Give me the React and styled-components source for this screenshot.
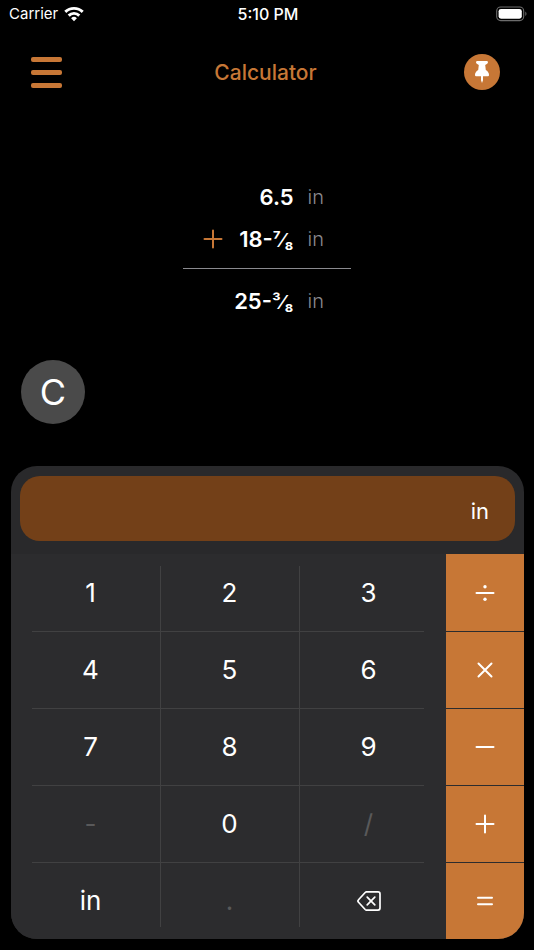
import React, { useState } from 'react'
import styled, { createGlobalStyle } from 'styled-components';

const orange = "#c77736";
const keyLine = "#414142";

const GlobalStyle = createGlobalStyle`
  * {
    box-sizing: border-box;
  }
  body {
    margin: 0;
    background-color: #000;
    color: #fff;
    font-family: Inter, "Liberation Sans", sans-serif;
  }
  button {
    margin: 0;
    padding: 0;
    border: none;
    background: none;
    color: inherit;
    font: inherit;
    cursor: pointer;
  }
  svg {
    display: block;
  }
`;

const Container = styled.div`
  display: flex;
  flex-direction: column;
  min-height: 100vh;
`;

const StatusBar = styled.div`
  display: grid;
  grid-template-columns: 1fr auto 1fr;
  align-items: center;
  height: 27px;
  padding: 0 7px 0 9px;
  font-size: 15px;
`;

const Carrier = styled.div`
  display: flex;
  align-items: center;
  gap: 6px;
`;

const Time = styled.span`
  font-size: 16px;
  font-weight: 500;
`;

const Battery = styled.div`
  justify-self: end;
`;

const Header = styled.header`
  display: grid;
  grid-template-columns: 1fr auto 1fr;
  align-items: center;
  height: 90px;
  padding: 0 34px 0 31px;
`;

const MenuButton = styled.button`
  display: flex;
  flex-direction: column;
  gap: 8px;
  width: 31px;
`;

const MenuBar = styled.span`
  height: 5px;
  border-radius: 2px;
  background-color: ${orange};
`;

const Title = styled.h1`
  margin: 0;
  color: ${orange};
  font-size: 21px;
  font-weight: 500;
`;

const PinButton = styled.button`
  display: flex;
  align-items: center;
  justify-content: center;
  justify-self: end;
  width: 36px;
  height: 36px;
  border-radius: 50%;
  background-color: ${orange};
`;

const Tape = styled.section`
  align-self: center;
  width: 168px;
  margin-top: 59px;
`;

const TapeRow = styled.div`
  display: flex;
  align-items: center;
  justify-content: flex-end;
  height: 42px;
  padding-right: 27px;
`;

const Operator = styled.span`
  margin-right: 16px;
`;

const Amount = styled.span`
  margin-right: 14px;
  font-size: 22px;
  font-weight: 600;
`;

const Fraction = styled.span`
  font-size: 19px;
`;

const Unit = styled.span`
  color: #8a8a8f;
  font-size: 20px;
  font-weight: 300;
`;

const Hr = styled.hr`
  height: 1px;
  margin: 8px 0 11px;
  border: none;
  background-color: #8a8a8f;
`;

const ClearButton = styled.button`
  width: 64px;
  height: 64px;
  margin: 38px 0 42px 21px;
  border-radius: 50%;
  background-color: #4a4a4a;
  font-size: 36px;
`;

const Panel = styled.main`
  margin: 0 10px 11px 11px;
  border-radius: 26px;
  background-color: #29292b;
  overflow: hidden;
`;

const Entry = styled.label`
  display: flex;
  align-items: center;
  height: 65px;
  margin: 10px 9px 13px;
  padding: 4px 26px 0;
  border-radius: 20px;
  background-color: #734018;
  font-size: 22px;
`;

const EntryInput = styled.input`
  flex: 1;
  min-width: 0;
  margin-right: 12px;
  border: none;
  outline: none;
  background: none;
  color: #fff;
  font: inherit;
  text-align: right;
`;

const Pad = styled.div`
  display: flex;
  background-color: #2c2c2e;
`;

const Keys = styled.div`
  flex: 1;
  display: grid;
  grid-template-columns: repeat(3, 1fr);
  grid-auto-rows: 77px;
  padding: 0 8px 0 10px;
`;

// Lines between the keys stop short of the edges of the pad
const Key = styled.button`
  display: flex;
  align-items: center;
  justify-content: center;
  color: ${(props) => (props.disabled ? "#59595a" : "#fff")};
  font-size: 26px;
  background-image: linear-gradient(${keyLine}, ${keyLine}),
    linear-gradient(${keyLine}, ${keyLine});
  background-repeat: no-repeat;
  background-position: ${(props) => (props.$col === 0 ? "right" : "left")} top,
    left ${(props) => (props.$row === 0 ? "bottom" : "top")};
  background-size:
    ${(props) => (props.$col === 1 ? "100%" : props.$col === 0 ? "calc(100% - 11px)" : "calc(100% - 14px)")}
    ${(props) => (props.$row === 0 ? "0" : "1px")},
    ${(props) => (props.$col === 0 ? "0" : "1px")}
    ${(props) => (props.$row === 0 || props.$row === 4 ? "calc(100% - 12px)" : "100%")};
`;

const Operations = styled.div`
  display: grid;
  grid-auto-rows: 77px;
  width: 78px;
`;

const OperationKey = styled.button`
  display: flex;
  align-items: center;
  justify-content: center;
  background-color: ${orange};
  border-top: 1px solid #2c2c2e;

  &:first-child {
    border-top: none;
  }
`;

const keys = ["1", "2", "3", "4", "5", "6", "7", "8", "9", "-", "0", "/", "in", ".", "delete"];
const unavailable = ["-", "/", "."];

const shapes = {
  divide: "M1.5 10h17",
  multiply: "M3.5 3.5l13 13M16.5 3.5l-13 13",
  subtract: "M1.5 10h17",
  add: "M1.5 10h17M10 1.5v17",
  equals: "M3 6.7h14M3 13.3h14",
};

const OperationIcon = ({ name, color = "#fff" }) => (
  <svg width="20" height="20" viewBox="0 0 20 20" fill="none" stroke={color} strokeWidth="2" strokeLinecap="round">
    <path d={shapes[name]} />
    {name === "divide" && (
      <g fill={color} stroke="none">
        <circle cx="10" cy="3.8" r="1.7" />
        <circle cx="10" cy="16.2" r="1.7" />
      </g>
    )}
  </svg>
);

const WifiIcon = () => (
  <svg width="20" height="16" viewBox="0 0 20 16" fill="none" stroke="#fff" strokeWidth="2.9">
    <path d="M1.3 5.9a12.4 12.4 0 0 1 17.400 0" />
    <path d="M4.700 9.600a7.500 7.500 0 0 1 10.600 0" />
    <path d="M10 15.200l-2.900-2.900a4.100 4.100 0 0 1 5.800 0z" fill="#fff" stroke="none" />
  </svg>
);

const BatteryIcon = () => (
  <svg width="31" height="16" viewBox="0 0 31 16">
    <rect x=".7" y="1" width="27" height="13.6" rx="4" fill="none" stroke="#6c6c6c" strokeWidth="1.1" />
    <rect x="2.6" y="2.9" width="23.2" height="9.8" rx="2.4" fill="#fff" />
    <path d="M29.3 5.6c1.6.7 1.6 3.8 0 4.5z" fill="#6c6c6c" />
  </svg>
);

const PinIcon = () => (
  <svg width="16" height="22" viewBox="0 0 16 22" fill="#fff">
    <path d="M3.2 0h9.600c1.500 0 1.500 2.200.4 2.700l-2 1.300.6 5c2.200 1.200 3.400 3.400 3.200 5.300-.1.600-.4.900-1 .9H9v4.100L8 22l-1-2.700v-4.100H2c-.6 0-.9-.3-1-.9-.2-1.900 1-4.100 3.200-5.300l.6-5-2-1.300C1.700 2.200 1.700 0 3.200 0z" />
  </svg>
);

const DeleteIcon = () => (
  <svg width="24" height="20" viewBox="0 0 24 20" fill="none" stroke="#fff" strokeWidth="1.7" strokeLinecap="round" strokeLinejoin="round">
    <path d="M9.6 .9h11.400a2 2 0 0 1 2 2v14.200a2 2 0 0 1-2 2H9.600a2 2 0 0 1-1.400-.6L1.500 11.200a1.700 1.700 0 0 1 0-2.400L8.200 1.500a2 2 0 0 1 1.400-.6z" />
    <path d="M10.200 6.200l7.600 7.600M17.800 6.200l-7.600 7.600" />
  </svg>
);

const App = () => {
  const [value, setValue] = useState("");

  const handleKey = (key) => {
    if (key === "delete") {
      setValue(value.slice(0, -1));
    } else if (key !== "in") {
      setValue(value + key);
    }
  };

  return (
    <>
      <GlobalStyle />
      <Container>
        <StatusBar>
          <Carrier>
            Carrier
            <WifiIcon />
          </Carrier>
          <Time>5:10 PM</Time>
          <Battery>
            <BatteryIcon />
          </Battery>
        </StatusBar>
        <Header>
          <MenuButton aria-label="Menu">
            <MenuBar />
            <MenuBar />
            <MenuBar />
          </MenuButton>
          <Title>Calculator</Title>
          <PinButton aria-label="Pin">
            <PinIcon />
          </PinButton>
        </Header>
        <Tape>
          <TapeRow>
            <Amount>6.5</Amount>
            <Unit>in</Unit>
          </TapeRow>
          <TapeRow>
            <Operator>
              <OperationIcon name="add" color={orange} />
            </Operator>
            <Amount>18-<Fraction>⁷⁄₈</Fraction></Amount>
            <Unit>in</Unit>
          </TapeRow>
          <Hr />
          <TapeRow>
            <Amount>25-<Fraction>³⁄₈</Fraction></Amount>
            <Unit>in</Unit>
          </TapeRow>
        </Tape>
        <ClearButton onClick={() => setValue("")}>C</ClearButton>
        <Panel>
          <Entry>
            <EntryInput aria-label="Value" value={value} readOnly />
            in
          </Entry>
          <Pad>
            <Keys>
              {keys.map((key, index) => (
                <Key
                  key={key}
                  $col={index % 3}
                  $row={Math.floor(index / 3)}
                  disabled={unavailable.includes(key)}
                  aria-label={key}
                  onClick={() => handleKey(key)}
                >
                  {key === "delete" ? <DeleteIcon /> : key}
                </Key>
              ))}
            </Keys>
            <Operations>
              {["divide", "multiply", "subtract", "add", "equals"].map((name) => (
                <OperationKey key={name} aria-label={name}>
                  <OperationIcon name={name} />
                </OperationKey>
              ))}
            </Operations>
          </Pad>
        </Panel>
      </Container>
    </>
  )
}

export default App
